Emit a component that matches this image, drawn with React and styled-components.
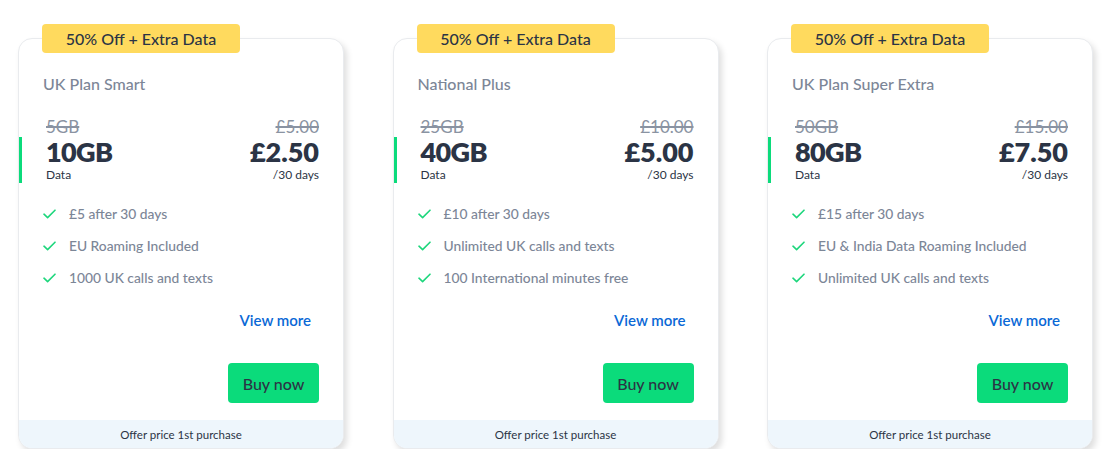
import React from "react";
import styled, { createGlobalStyle } from "styled-components";

const Global = createGlobalStyle`
  html, body { margin: 0; padding: 0; background: #ffffff; }
  body { font-family: Lato, "Open Sans", sans-serif; color: #2b3445; }
  * { box-sizing: border-box; }
`;

const Page = styled.div`
  display: flex;
  gap: 48.5px;
  padding: 38px 0 0 18px;
`;

const Card = styled.div`
  position: relative;
  flex: none;
  width: 326px;
  height: 411px;
  border: 1px solid #e9ebee;
  border-radius: 14px;
  background: #fff;
  box-shadow: 3px 4px 6px rgba(0, 0, 0, 0.13);
  display: flex;
  flex-direction: column;
`;

const Badge = styled.div`
  position: absolute;
  top: -15px;
  left: 23px;
  width: 198px;
  height: 29px;
  border-radius: 4px;
  background: #ffda5e;
  display: flex;
  align-items: center;
  justify-content: center;
  font-size: 16px;
  font-weight: 500;
  color: #2b3445;
`;

const Title = styled.div`
  padding: 35px 24px 0;
  font-size: 16px;
  line-height: 20px;
  color: #7c8697;
  font-weight: 500;
`;

const DataBlock = styled.div`
  margin-top: 23px;
  padding: 0 24px 0 27px;
  display: flex;
  justify-content: space-between;
`;

const Col = styled.div`
  display: flex;
  flex-direction: column;
  align-items: ${(p) => (p.$right ? "flex-end" : "flex-start")};
`;

const Strike = styled.div`
  font-size: 17px;
  line-height: 20px;
  color: #8a93a2;
  text-decoration: line-through;
  text-decoration-thickness: 1.5px;
`;

const Main = styled.div`
  position: relative;
  display: flex;
  flex-direction: column;
  align-items: inherit;
  height: 46px;
`;

const Accent = styled.span`
  position: absolute;
  left: -27px;
  top: 0;
  width: 3px;
  height: 46px;
  background: #0bdb7b;
`;

const Big = styled.div`
  font-size: 27px;
  line-height: 30px;
  font-weight: 800;
  letter-spacing: ${(p) => (p.$tight ? "-0.6px" : "0")};
  color: #2b3445;
`;

const Small = styled.div`
  font-size: 12px;
  line-height: 16px;
  color: #2b3445;
`;

const Features = styled.ul`
  list-style: none;
  margin: 21px 0 0;
  padding: 0 24px;
  display: flex;
  flex-direction: column;
  gap: 12px;
`;

const Feature = styled.li`
  display: flex;
  align-items: center;
  gap: 13px;
  font-size: 13.8px;
  line-height: 20px;
  color: #7c8697;
  font-weight: 500;
`;

const ViewMore = styled.a`
  align-self: flex-end;
  margin: 22px 32px 0 0;
  font-size: 15px;
  line-height: 20px;
  font-weight: 600;
  color: #0a68d6;
  text-decoration: none;
`;

const BuyButton = styled.button`
  align-self: flex-end;
  margin: 33px 24px 0 0;
  width: 91px;
  height: 40px;
  border: none;
  border-radius: 4px;
  background: #0bdb7b;
  color: #2b3445;
  font-family: inherit;
  font-size: 16px;
  font-weight: 500;
`;

const Footer = styled.div`
  margin-top: auto;
  height: 28px;
  background: #eef6fc;
  border-radius: 0 0 13px 13px;
  display: flex;
  align-items: center;
  justify-content: center;
  font-size: 11.5px;
  color: #2b3445;
`;

const Check = () => (
  <svg width="13" height="10" viewBox="0 0 13 10" fill="none">
    <path d="M1 5.2 L4.6 8.6 L12 1.2" stroke="#1dd67c" strokeWidth="1.6" strokeLinecap="round" strokeLinejoin="round" />
  </svg>
);

const plans = [
  {
    name: "UK Plan Smart",
    oldData: "5GB",
    data: "10GB",
    oldPrice: "£5.00",
    price: "£2.50",
    features: ["£5 after 30 days", "EU Roaming Included", "1000 UK calls and texts"],
  },
  {
    name: "National Plus",
    oldData: "25GB",
    data: "40GB",
    oldPrice: "£10.00",
    price: "£5.00",
    features: ["£10 after 30 days", "Unlimited UK calls and texts", "100 International minutes free"],
  },
  {
    name: "UK Plan Super Extra",
    oldData: "50GB",
    data: "80GB",
    oldPrice: "£15.00",
    price: "£7.50",
    features: ["£15 after 30 days", "EU & India Data Roaming Included", "Unlimited UK calls and texts"],
  },
];

export default function App() {
  return (
    <>
      <Global />
      <Page>
        {plans.map((p) => (
          <Card key={p.name}>
            <Badge>50% Off + Extra Data</Badge>
            <Title>{p.name}</Title>
            <DataBlock>
              <Col>
                <Strike>{p.oldData}</Strike>
                <Main>
                  <Accent />
                  <Big $tight>{p.data}</Big>
                  <Small>Data</Small>
                </Main>
              </Col>
              <Col $right>
                <Strike>{p.oldPrice}</Strike>
                <Main>
                  <Big>{p.price}</Big>
                  <Small>/30 days</Small>
                </Main>
              </Col>
            </DataBlock>
            <Features>
              {p.features.map((f) => (
                <Feature key={f}>
                  <Check />
                  {f}
                </Feature>
              ))}
            </Features>
            <ViewMore href="#">View more</ViewMore>
            <BuyButton>Buy now</BuyButton>
            <Footer>Offer price 1st purchase</Footer>
          </Card>
        ))}
      </Page>
    </>
  );
}
